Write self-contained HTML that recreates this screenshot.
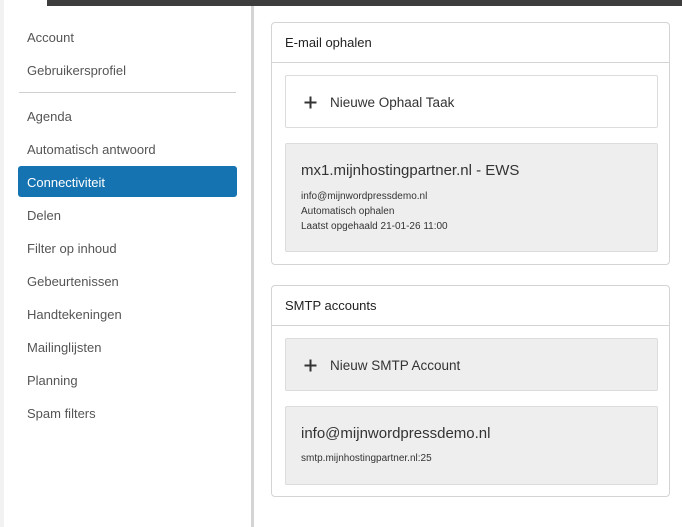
<!DOCTYPE html>
<html><head><style>
*{box-sizing:border-box;margin:0;padding:0}
body{width:682px;height:527px;background:#fff;font-family:"Liberation Sans",sans-serif;position:relative;overflow:hidden;color:#333}
.topbar{position:absolute;left:47px;top:0;width:635px;height:6px;background:#3d3d3d}
.ledge{position:absolute;left:0;top:0;width:4px;height:527px;background:#f2f2f2}
.div{position:absolute;left:251px;top:6px;width:3px;height:521px;background:#d4d4d4}
.mi{position:absolute;left:27px;font-size:13px;color:#555}
.act{position:absolute;left:18px;top:166px;width:219px;height:31px;background:#1673b1;border-radius:3px}
.sep{position:absolute;left:19px;top:92px;width:217px;height:1px;background:#d0d0d0}
.panel{position:absolute;left:271px;width:399px;border:1px solid #d4d4d4;border-radius:4px}
.ph{height:40px;border-bottom:1px solid #d4d4d4;font-size:13px;color:#222;padding:12px 0 0 13px}
.box{position:absolute;left:13px;width:373px;border:1px solid #dcdcdc;border-radius:2px}
.btn{font-size:13.5px;color:#333}
.plus{position:absolute;left:18px;top:20px}
</style></head><body>
<div class="topbar"></div><div class="ledge"></div><div class="div"></div>
<div class="mi" style="top:30px">Account</div>
<div class="mi" style="top:63px">Gebruikersprofiel</div>
<div class="sep"></div>
<div class="mi" style="top:109px">Agenda</div>
<div class="mi" style="top:142px">Automatisch antwoord</div>
<div class="act"></div>
<div class="mi" style="top:175px;color:#fff">Connectiviteit</div>
<div class="mi" style="top:208px">Delen</div>
<div class="mi" style="top:241px">Filter op inhoud</div>
<div class="mi" style="top:274px">Gebeurtenissen</div>
<div class="mi" style="top:307px">Handtekeningen</div>
<div class="mi" style="top:340px">Mailinglijsten</div>
<div class="mi" style="top:373px">Planning</div>
<div class="mi" style="top:406px">Spam filters</div>

<div class="panel" style="top:22px;height:243px">
<div class="ph">E-mail ophalen</div>
<div class="box" style="top:52px;height:53px;background:#fff">
<svg class="plus" width="13" height="13" viewBox="0 0 13 13"><path d="M6.5 0.5V12.5M0.5 6.5H12.5" stroke="#333" stroke-width="2"/></svg><span class="btn" style="position:absolute;left:44px;top:19px">Nieuwe Ophaal Taak</span></div>
<div class="box" style="top:120px;height:109px;background:#eee">
<div style="position:absolute;left:15px;top:18px;font-size:15px;color:#333">mx1.mijnhostingpartner.nl - EWS</div>
<div style="position:absolute;left:15px;top:45px;font-size:10px;line-height:15px;color:#333">info@mijnwordpressdemo.nl<br>Automatisch ophalen<br>Laatst opgehaald 21-01-26 11:00</div>
</div>
</div>

<div class="panel" style="top:285px;height:212px">
<div class="ph">SMTP accounts</div>
<div class="box" style="top:52px;height:53px;background:#eee">
<svg class="plus" width="13" height="13" viewBox="0 0 13 13"><path d="M6.5 0.5V12.5M0.5 6.5H12.5" stroke="#333" stroke-width="2"/></svg><span class="btn" style="position:absolute;left:44px;top:19px">Nieuw SMTP Account</span></div>
<div class="box" style="top:120px;height:79px;background:#eee">
<div style="position:absolute;left:15px;top:18px;font-size:15px;color:#333">info@mijnwordpressdemo.nl</div>
<div style="position:absolute;left:15px;top:46px;font-size:10px;color:#333">smtp.mijnhostingpartner.nl:25</div>
</div>
</div>
</body></html>
